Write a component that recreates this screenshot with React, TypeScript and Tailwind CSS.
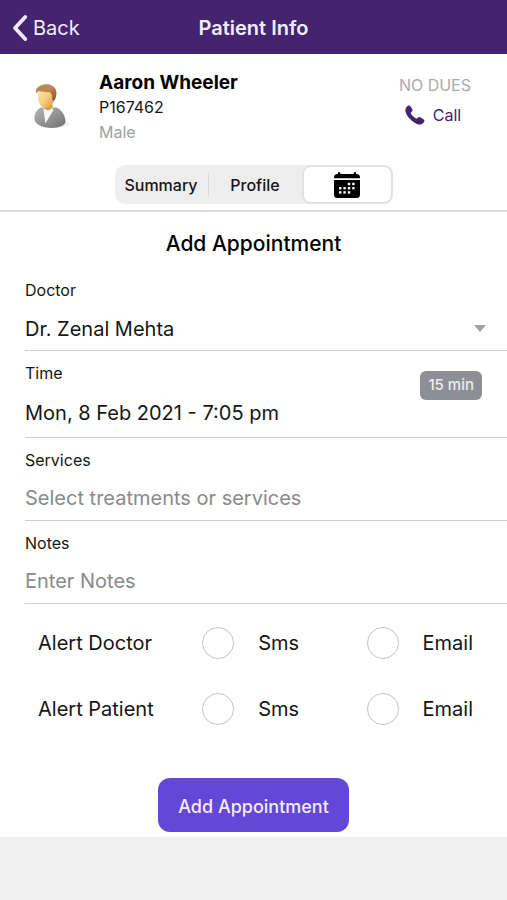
// Patient info screen, "appointment" tab:
// - purple top bar with back link
// - patient summary + segmented tabs
// - add appointment form with alert toggles

import { useState } from 'react'

type TabKey = 'summary' | 'profile' | 'calendar'

function BackIcon() {
  return (
    <svg width="17" height="28" viewBox="0 0 17 28" fill="none" aria-hidden="true">
      <path
        d="M13.200 3 3 14l10.200 11"
        stroke="currentColor"
        strokeWidth="3.8"
        strokeLinecap="round"
        strokeLinejoin="round"
      />
    </svg>
  )
}

function PhoneIcon() {
  return (
    <svg width="20" height="20" viewBox="0 0 20 20" fill="currentColor" aria-hidden="true">
      <path d="M.8 3.300C1.500 1.600 2.700.6 4 .5c.9 0 1.500.6 2 1.500l1.300 2.300c.5.9.3 1.600-.4 2.300l-.9.9c-.3.3-.3.6-.1 1 .5.9 1.300 1.900 2.200 2.800s2 1.700 2.900 2.200c.4.2.8.2 1.100-.1l.8-.8c.7-.7 1.500-.9 2.300-.4l2.900 1.800c1 .6 1.400 1.200 1.300 2-.2 1.300-1.300 2.500-2.800 3.200-1.500.6-3.300.4-5.200-.5-2.200-1-4.500-2.700-6.600-4.900C2.700 11.700 1.300 9.400.7 7.300.3 5.800.3 4.400.8 3.300Z" />
    </svg>
  )
}

function CalendarIcon() {
  return (
    <svg width="28" height="28" viewBox="0 0 28 28" aria-hidden="true">
      <path d="M5 1.200h2.200V3h13.600V1.200H23V3h.5A3.500 3.500 0 0 1 27 6.500v.8H1v-.8A3.500 3.500 0 0 1 4.500 3H5Z" />
      <path d="M1 9h26v14.500a3.500 3.500 0 0 1-3.500 3.500h-19A3.500 3.500 0 0 1 1 23.500Z" />
      <g fill="#fff">
        <rect x="14.800" y="11.800" width="2.400" height="2.400" />
        <rect x="19.200" y="11.800" width="2.400" height="2.400" />
        <rect x="6" y="16" width="2.400" height="2.400" />
        <rect x="10.400" y="16" width="2.400" height="2.400" />
        <rect x="14.800" y="16" width="2.400" height="2.400" />
        <rect x="19.200" y="16" width="2.400" height="2.400" />
        <rect x="6" y="20.200" width="2.400" height="2.400" />
        <rect x="10.400" y="20.200" width="2.400" height="2.400" />
        <rect x="14.800" y="20.200" width="2.400" height="2.400" />
      </g>
    </svg>
  )
}

function Avatar() {
  return (
    <svg width="40" height="48" viewBox="0 0 40 48" role="img" aria-label="Patient avatar">
      <defs>
        <linearGradient id="face" x1="0" y1="0" x2="1" y2="1">
          <stop offset="0" stopColor="#ffe9b8" />
          <stop offset=".5" stopColor="#f8cf83" />
          <stop offset="1" stopColor="#d98f35" />
        </linearGradient>
        <linearGradient id="hair" x1="0" y1="0" x2="1" y2="1">
          <stop offset="0" stopColor="#b98253" />
          <stop offset=".45" stopColor="#c08a5c" />
          <stop offset="1" stopColor="#8a4a1c" />
        </linearGradient>
        <linearGradient id="suit" x1="0" y1="0" x2="1" y2="1">
          <stop offset="0" stopColor="#b4b4b4" />
          <stop offset=".6" stopColor="#8d8d8d" />
          <stop offset="1" stopColor="#6f6f6f" />
        </linearGradient>
      </defs>
      <ellipse cx="23" cy="41" rx="15" ry="3.500" fill="#f1f1f1" />
      <path
        d="M9 24.500C4.500 26.500 2.500 31 2.400 35.500c0 5.500 7.600 9.500 17.100 9.500 8.500 0 14-3.200 14-6.200 0-6-3.500-11.300-8.500-14.300Z"
        fill="url(#suit)"
      />
      <path d="m11.500 26 1.800 14.500L21.500 27l-3-3.500Z" fill="#f6f6f6" />
      <path
        d="M11.500 20.500c0 4 1.500 6.300 4 6.800 3 0 5-2 5.500-5.500Z"
        fill="#dc9a45"
      />
      <path
        d="M7 8C5.300 12 5.500 17 7.300 20.300c1.700 3.100 4.200 4.700 6.700 4.500 4.300-.3 7.700-4.500 9-9.300C23.700 11 21 5 15.500 3.500 11.500 3 8.500 5 7 8Z"
        fill="url(#face)"
      />
      <path
        d="M5 10.500C3 8 4 5.300 7 3.600 9 1.500 13 .6 17 1.600c5.500 1.200 8.300 5.400 7.300 10.200-.3 2.700-1.300 5-2.600 6.200l-1.500-1.500c.5-3.300-.2-5.500-2.700-7.500-3.500.7-8.500-.8-10.500-1C6 8.500 5.500 9.500 5 10.500Z"
        fill="url(#hair)"
      />
    </svg>
  )
}

const inputClass = 'block h-7 w-full bg-transparent p-0 text-[20px] outline-none'

function TextField(props: { id: string; label: string; placeholder: string }) {
  const { id, label, placeholder } = props
  return (
    <div className="flex flex-col gap-[14px] border-b border-[#cfcfcf] pt-3 pb-2">
      <label htmlFor={id} className="text-base leading-5">
        {label}
      </label>
      <input
        id={id}
        type="text"
        placeholder={placeholder}
        className={`${inputClass} placeholder:text-[#8a8a8a]`}
      />
    </div>
  )
}

function AlertRow({ name }: { name: string }) {
  return (
    <div
      role="group"
      aria-label={name}
      className="grid h-[66px] grid-cols-[1fr_1fr_auto] items-center pr-[34px] pl-[38px] text-[20px]"
    >
      <span>{name}</span>
      {['Sms', 'Email'].map((channel) => (
        <label key={channel} className="flex items-center gap-6">
          <input
            type="checkbox"
            className="size-8 shrink-0 appearance-none rounded-full border border-[#c4c4c4] bg-white checked:bg-[#6347d6]"
          />
          {channel}
        </label>
      ))}
    </div>
  )
}

export default function App() {
  const [tab, setTab] = useState<TabKey>('calendar')

  const tabClass = (key: TabKey) =>
    [
      'flex h-full items-center justify-center rounded-[9px]',
      key === 'calendar' ? 'w-[91px]' : 'flex-1',
      tab === key ? 'border-2 border-[#e2e2e2] bg-white' : '',
    ].join(' ')

  return (
    <div className="min-h-screen bg-[#f0f0f0] font-['Inter','Liberation_Sans',sans-serif] text-[#151515]">
      <header className="grid h-[54px] grid-cols-[1fr_auto_1fr] items-center bg-[#44236f] px-3 pt-[2px] text-[20px] text-[#f3edfb]">
        <a href="#back" className="flex items-center gap-1">
          <BackIcon />
          Back
        </a>
        <h1 className="font-semibold">Patient Info</h1>
      </header>

      <main className="bg-white">
        <section className="border-b-2 border-[#dedede] pb-[6px]">
          <div className="flex items-start pt-[17px] pr-9 pl-8">
            <div className="w-[67px] shrink-0 pt-3">
              <Avatar />
            </div>
            <div className="flex-1">
              <h2 className="text-[19px] leading-6 font-bold text-black">Aaron Wheeler</h2>
              <p className="text-base leading-6">P167462</p>
              <p className="text-base leading-[26px] text-[#a0a0a0]">Male</p>
            </div>
            <div className="flex flex-col items-center gap-2 pt-1">
              <p className="text-base leading-5 text-[#ababab]">NO DUES</p>
              <a href="#call" className="flex items-center gap-2 pr-1 text-base leading-6 text-[#44236f]">
                <PhoneIcon />
                Call
              </a>
            </div>
          </div>

          <div
            role="tablist"
            className="mx-auto mt-5 flex h-[39px] w-[278px] items-center rounded-[10px] bg-[#eeeeee] text-base font-medium"
          >
            <button
              type="button"
              role="tab"
              aria-selected={tab === 'summary'}
              className={tabClass('summary')}
              onClick={() => setTab('summary')}
            >
              Summary
            </button>
            <span className="h-6 w-px bg-[#d8d8d8]" />
            <button
              type="button"
              role="tab"
              aria-selected={tab === 'profile'}
              className={tabClass('profile')}
              onClick={() => setTab('profile')}
            >
              Profile
            </button>
            <button
              type="button"
              role="tab"
              aria-label="Appointments"
              aria-selected={tab === 'calendar'}
              className={tabClass('calendar')}
              onClick={() => setTab('calendar')}
            >
              <CalendarIcon />
            </button>
          </div>
        </section>

        <form onSubmit={(e) => e.preventDefault()}>
          <h2 className="pt-[18px] pb-[10px] text-center text-[21px] leading-7 font-medium text-black">
            Add Appointment
          </h2>

          <div className="pl-[25px]">
            <div className="flex flex-col gap-[14px] border-b border-[#cfcfcf] pt-3 pb-2">
              <label htmlFor="doctor" className="text-base leading-5">
                Doctor
              </label>
              <div className="flex items-center">
                <select id="doctor" className={`${inputClass} appearance-none`}>
                  <option>Dr. Zenal Mehta</option>
                </select>
                <svg
                  className="mr-[21px] shrink-0"
                  width="12"
                  height="7"
                  viewBox="0 0 12 7"
                  fill="#a3a3a3"
                  aria-hidden="true"
                >
                  <path d="M0 0h12L6 7Z" />
                </svg>
              </div>
            </div>

            <div className="flex items-start border-b border-[#cfcfcf] pt-3 pb-[10px]">
              <div className="flex flex-1 flex-col gap-4">
                <label htmlFor="time" className="text-base leading-5">
                  Time
                </label>
                <input
                  id="time"
                  type="text"
                  defaultValue="Mon, 8 Feb 2021 - 7:05 pm"
                  className={inputClass}
                />
              </div>
              <button
                type="button"
                className="mt-2 mr-[25px] h-[29px] rounded-md bg-[#8e8f96] px-2 text-[15px] font-medium text-[#ececf0]"
              >
                15 min
              </button>
            </div>

            <TextField id="services" label="Services" placeholder="Select treatments or services" />
            <TextField id="notes" label="Notes" placeholder="Enter Notes" />
          </div>

          <div className="pt-[6px]">
            <AlertRow name="Alert Doctor" />
            <AlertRow name="Alert Patient" />
          </div>

          <div className="flex justify-center pt-9 pb-[5px]">
            <button
              type="submit"
              className="h-[54px] rounded-xl bg-[#6347d6] px-5 pt-[2px] text-[18px] font-medium text-[#f3edfb]"
            >
              Add Appointment
            </button>
          </div>
        </form>
      </main>
    </div>
  )
}
